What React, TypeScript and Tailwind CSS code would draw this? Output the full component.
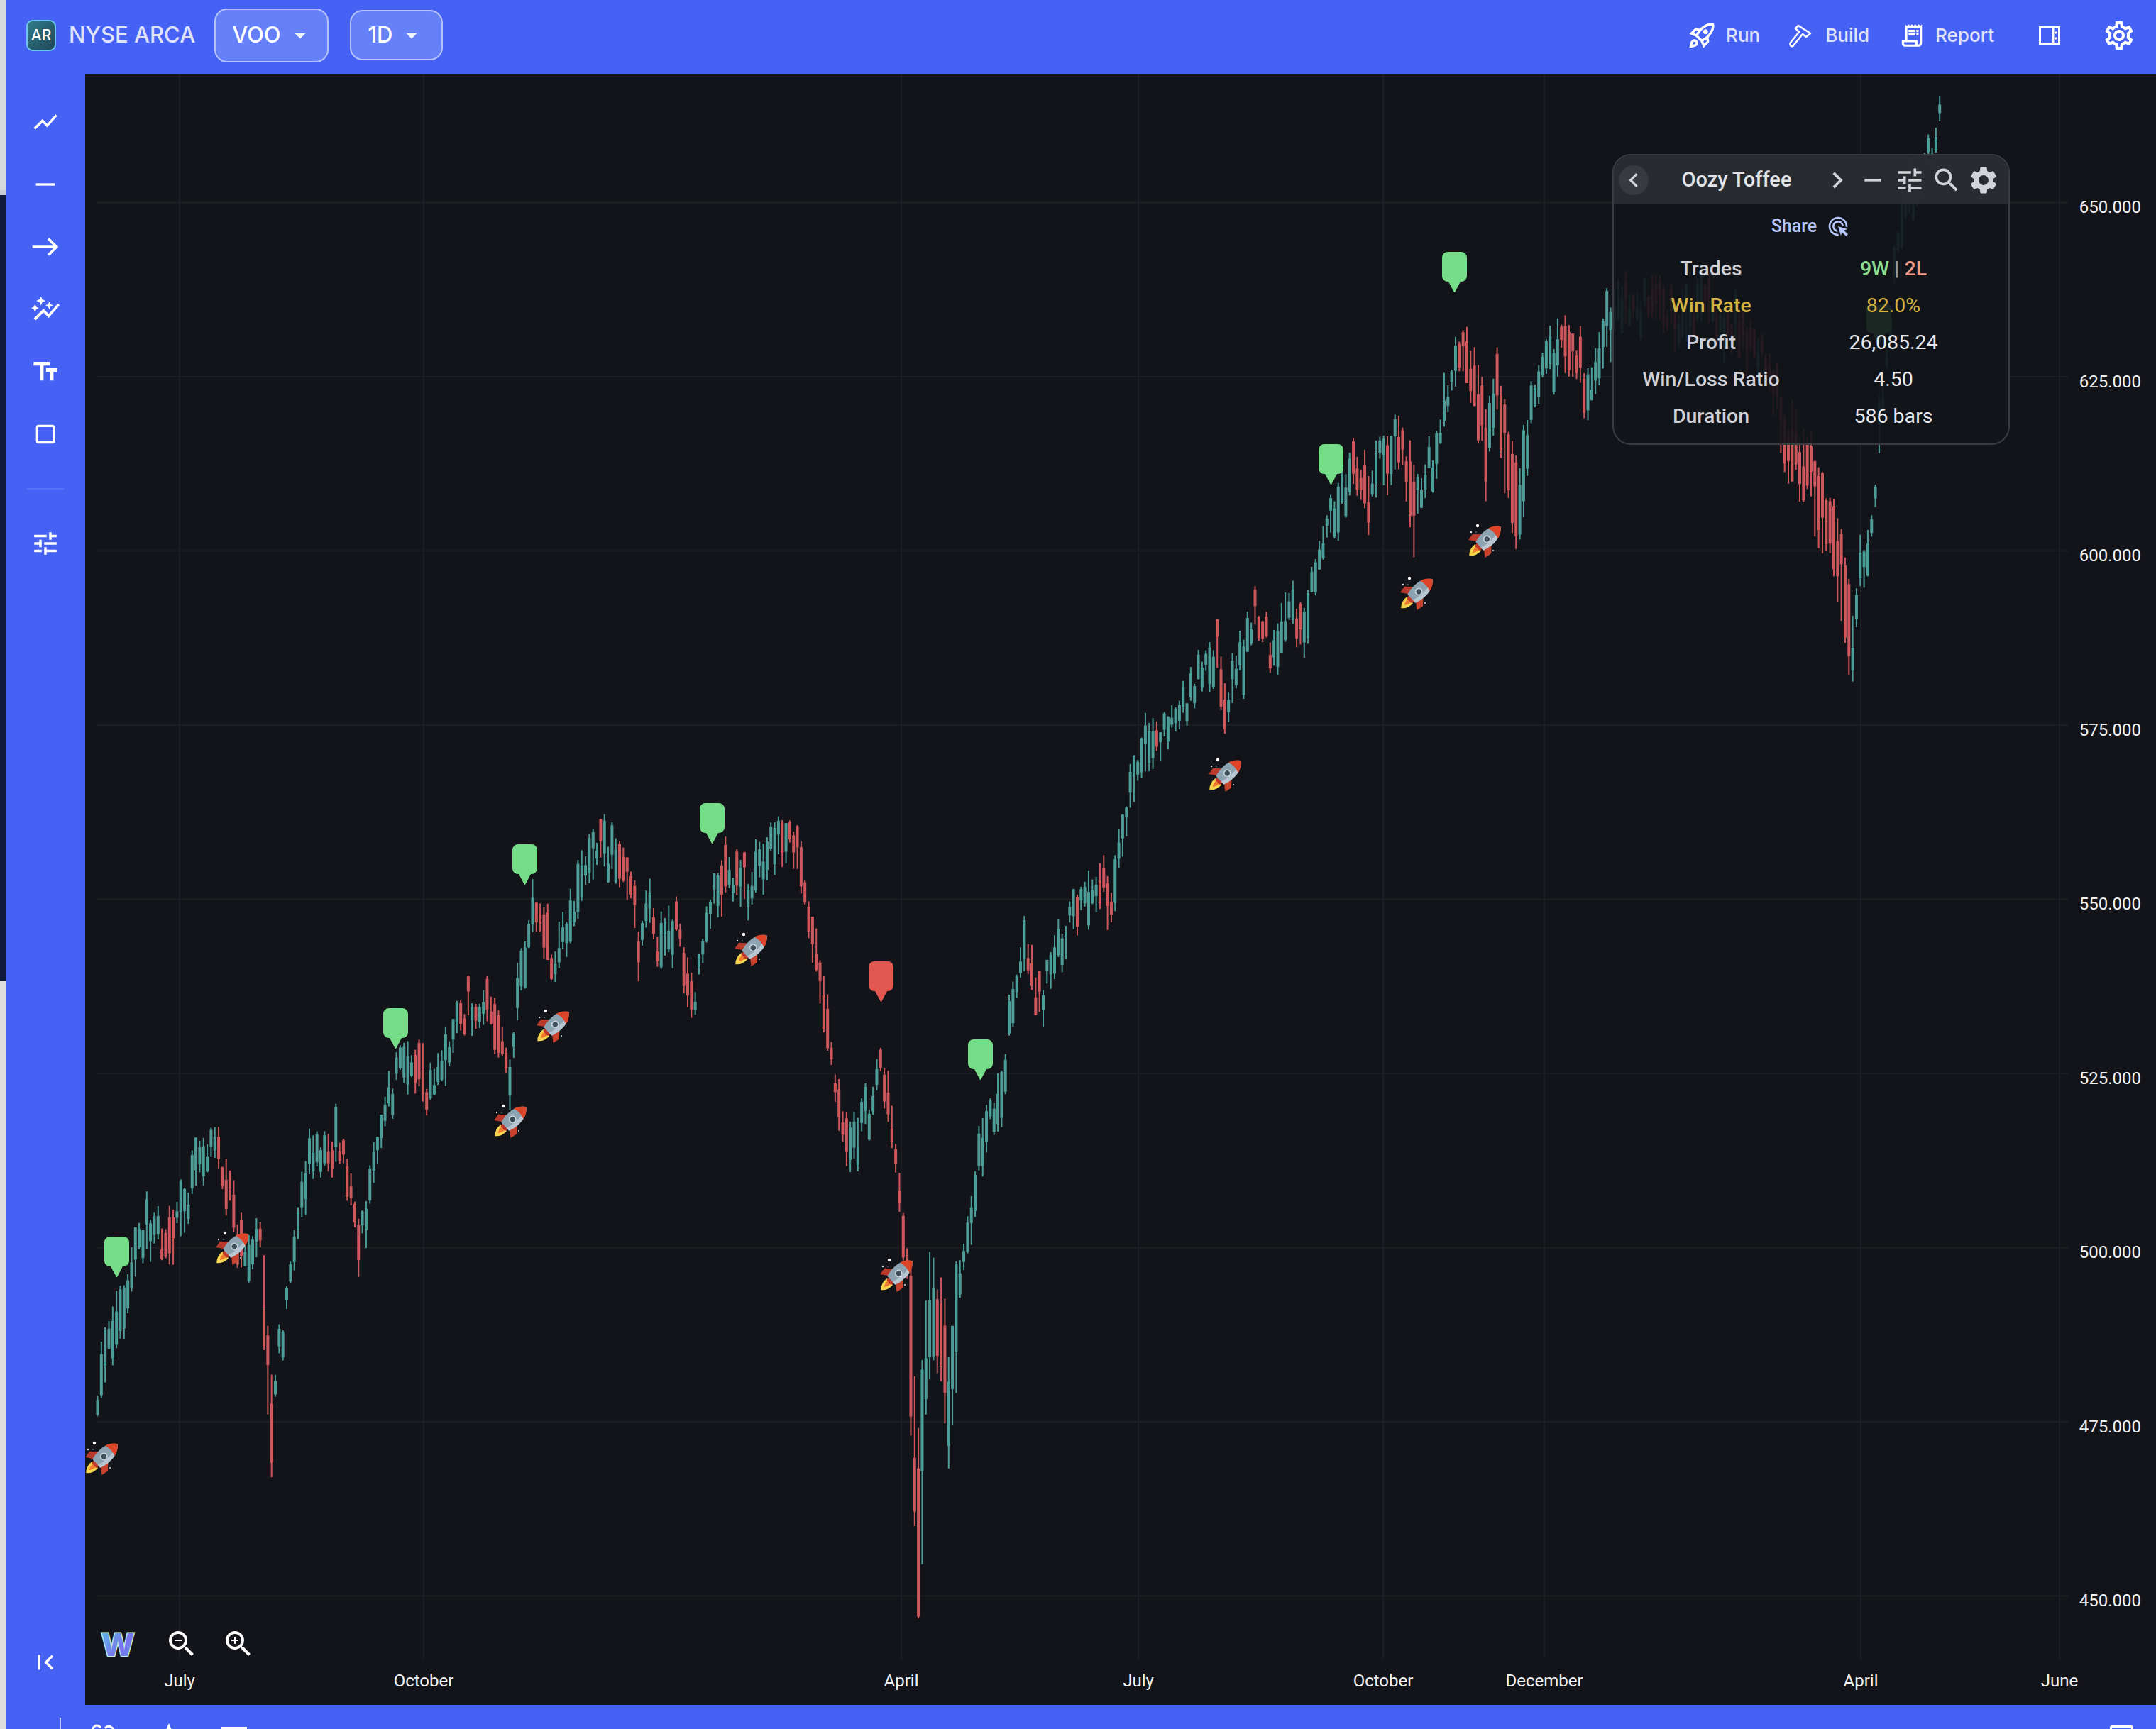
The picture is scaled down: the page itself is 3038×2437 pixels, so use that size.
import {
  MdAdsClick,
  MdArrowDropDown,
  MdAutoGraph,
  MdChevronLeft,
  MdChevronRight,
  MdCropSquare,
  MdEast,
  MdFirstPage,
  MdHorizontalRule,
  MdOutlineReceiptLong,
  MdOutlineRocketLaunch,
  MdOutlineSettings,
  MdRemove,
  MdSearch,
  MdSettings,
  MdShowChart,
  MdTextFields,
  MdTune,
  MdZoomIn,
  MdZoomOut,
} from 'react-icons/md';

const S = 1.9375;

// price path, traced from the picture (x, y of the bar centres at 1568 wide)
const path: [number, number][] = [
  [71, 1012], [78, 985], [85, 962], [92, 950], [97, 915], [105, 895], [113, 890], [125, 900], [133, 885],
  [140, 855], [148, 835], [157, 830], [163, 855], [170, 885], [176, 915], [185, 900], [189, 885], [193, 960],
  [197, 1030], [203, 985], [210, 945], [216, 895], [224, 850], [233, 835], [248, 835], [254, 860], [262, 905],
  [268, 870], [275, 835], [283, 800], [290, 780], [300, 777], [312, 795], [322, 770], [332, 740], [342, 730],
  [355, 738], [362, 748], [371, 780], [378, 715], [386, 665], [394, 670], [403, 705], [410, 680], [420, 650],
  [430, 630], [438, 618], [452, 625], [460, 640], [465, 695], [472, 660], [480, 695], [492, 675], [498, 705],
  [505, 735], [512, 685], [520, 640], [530, 640], [538, 630], [545, 650], [555, 630], [565, 610], [575, 605],
  [583, 640], [592, 690], [600, 735], [608, 785], [616, 840], [624, 825], [634, 805], [641, 780], [648, 815],
  [654, 860], [660, 930], [665, 1050], [669, 1125], [673, 985], [680, 945], [686, 990], [691, 1025], [698, 930],
  [706, 880], [712, 845], [717, 815], [724, 815], [730, 790], [734, 735], [742, 695], [750, 700], [757, 730],
  [765, 695], [772, 690], [780, 660], [792, 645], [802, 645], [810, 660], [815, 610], [822, 575], [832, 545],
  [845, 535], [855, 525], [866, 505], [878, 480], [886, 475], [890, 520], [898, 490], [905, 475], [912, 450],
  [920, 455], [926, 480], [935, 445], [947, 455], [957, 420], [966, 385], [975, 365], [985, 345], [996, 360],
  [1005, 330], [1020, 325], [1028, 370], [1035, 345], [1046, 330], [1052, 290], [1058, 255], [1068, 270],
  [1076, 295], [1081, 325], [1088, 280], [1095, 320], [1104, 365], [1112, 310], [1120, 270], [1135, 255],
  [1148, 265], [1156, 290], [1165, 240], [1180, 225], [1200, 220], [1220, 235], [1240, 225], [1262, 240],
  [1285, 265], [1300, 320], [1315, 340], [1328, 375], [1338, 410], [1346, 475], [1354, 405], [1361, 395],
  [1368, 300], [1373, 262], [1378, 185], [1385, 140], [1393, 150], [1400, 125], [1408, 100], [1411, 74],
];

const wide: [number, number, number][] = [
  [190, 200, 68], [660, 672, 150], [672, 696, 80], [1024, 1030, 56], [1075, 1110, 58], [1300, 1335, 50], [1335, 1350, 66],
];

function midAt(x: number) {
  for (let i = 1; i < path.length; i++) {
    if (x <= path[i][0]) {
      const [x0, y0] = path[i - 1];
      const [x1, y1] = path[i];
      return y0 + ((y1 - y0) * (x - x0)) / (x1 - x0);
    }
  }
  return path[path.length - 1][1];
}

let seed = 91;
function rnd() {
  seed = (seed * 16807) % 2147483647;
  return seed / 2147483647;
}

type Bar = { x: number; top: number; h: number; bodyTop: number; bodyH: number; up: boolean };

function makeBars() {
  const bars: Bar[] = [];
  for (let px = 137.5; px < 2736; px += 5.33) {
    const x = px / S;
    const m = midAt(x) * S;
    const slope = midAt(x + 3) - midAt(x - 3);
    const extra = wide.find((w) => x >= w[0] && x <= w[1]);
    const range = (extra ? extra[2] * (0.7 + rnd() * 0.5) : px > 2700 ? 18 : 15 + rnd() * 28) * S;
    const top = m - range / 2 + (rnd() - 0.5) * 44;
    const bodyH = range * (0.3 + rnd() * 0.55);
    const bodyTop = top + (range - bodyH) * rnd();
    bars.push({ x: px, top, h: range, bodyTop, bodyH, up: slope + (rnd() - 0.5) * 18 < 0 });
  }
  return bars;
}

const bars = makeBars();

const priceLabels = ['650.000', '625.000', '600.000', '575.000', '550.000', '525.000', '500.000', '475.000', '450.000'];
const monthLabels: [string, number][] = [
  ['July', 253], ['October', 597], ['April', 1270], ['July', 1604], ['October', 1949], ['December', 2176],
  ['April', 2622], ['June', 2902],
];

const markers: [number, number, string][] = [
  [165, 1743, '#75dd87'], [558, 1421, '#75dd87'], [740, 1190, '#75dd87'], [1004, 1132, '#75dd87'],
  [1242, 1355, '#e2574f'], [1382, 1465, '#75dd87'], [1876, 626, '#75dd87'], [2050, 355, '#75dd87'], [2648, 428, '#75dd87'],
];

const rockets: [number, number][] = [
  [143, 2056], [327, 1760], [719, 1581], [779, 1447], [1058, 1339], [1263, 1798], [1726, 1093], [1996, 837], [2092, 763],
];

function Rocket({ x, y }: { x: number; y: number }) {
  return (
    <g transform={`translate(${x} ${y})`}>
      <g transform="rotate(47) scale(0.9)">
        <path d="M-9 -6 L-21 6 L-19 17 L-8 9Z" fill="#b93a2c" />
        <path d="M9 -6 L21 6 L19 17 L8 9Z" fill="#c9432f" />
        <path d="M-7 14 Q-8 26 0 33 Q8 26 7 14Z" fill="#f6d54e" />
        <path d="M-3.500 14 Q-4 21 0 26 Q4 21 3.500 14Z" fill="#ee7a2f" />
        <path d="M-7 8 L7 8 L5 16 L-5 16Z" fill="#c2392b" />
        <path d="M0 -34 C12 -25 15 -8 9 11 L-9 11 C-15 -8 -12 -25 0 -34Z" fill="#8ea3b2" />
        <path d="M0 -34 C12 -25 15 -8 9 11 L3 11 C8 -6 6 -22 0 -34Z" fill="#b7c6d1" />
        <path d="M0 -34 C6 -30 9 -25 11 -18 Q0 -22 -11 -18 C-9 -25 -6 -30 0 -34Z" fill="#dc4527" />
        <circle cx="0" cy="-5" r="6" fill="#c7d3db" />
        <circle cx="0" cy="-5" r="4" fill="#3c4c59" />
      </g>
      <circle cx="-10" cy="-22" r="2.200" fill="#ffffff" />
      <circle cx="-19" cy="-13" r="1.200" fill="#e5e7eb" />
      <circle cx="12" cy="13" r="1" fill="#e5e7eb" />
      <circle cx="-12" cy="-13" r="0.800" fill="#9ca3af" />
    </g>
  );
}

function Chart() {
  return (
    <svg viewBox="120 105 2918 2298" className="absolute inset-0 h-full w-full font-['Roboto',sans-serif]">
      {priceLabels.map((label, i) => (
        <g key={label}>
          <rect x={136} y={284.5 + i * 245.5} width={2778} height={2} fill="#1c1e23" />
          <text x={3017} y={300 + i * 245.5} textAnchor="end" fontSize={24} fill="#f0f1f3">
            {label}
          </text>
        </g>
      ))}
      {monthLabels.map(([label, x], i) => (
        <g key={i}>
          <rect x={x - 1} y={105} width={2} height={2233} fill="#1c1e23" />
          <text x={x} y={2377} textAnchor="middle" fontSize={24} fill="#f0f1f3">
            {label}
          </text>
        </g>
      ))}
      {bars.map((b) => {
        const color = b.up ? '#4d9e99' : '#cf585c';
        return (
          <g key={b.x} fill={color}>
            <rect x={b.x - 1} y={b.top} width={2} height={b.h} />
            <rect x={b.x - 2} y={b.bodyTop} width={4} height={b.bodyH} />
          </g>
        );
      })}
      {markers.map(([x, y, color]) => (
        <path
          key={x}
          fill={color}
          d={`M${x - 9} ${y} h18 a8 8 0 0 1 8 8 v26 a8 8 0 0 1 -8 8 h-1 l-8 15 h-1 l-8 -15 h-1 a8 8 0 0 1 -8 -8 v-26 a8 8 0 0 1 8 -8z`}
        />
      ))}
      {rockets.map(([x, y]) => (
        <Rocket key={x} x={x} y={y} />
      ))}
    </svg>
  );
}

function WLogo() {
  return (
    <svg viewBox="-4 -8 58 56" className="h-[56px] w-[58px] font-['Inter',sans-serif]">
      <defs>
        <linearGradient id="wfill" x1="0" y1="0" x2="1" y2="1">
          <stop offset="0" stopColor="#58c4e8" />
          <stop offset="0.6" stopColor="#7a72ef" />
          <stop offset="1" stopColor="#5f9fea" />
        </linearGradient>
      </defs>
      <text
        x="25"
        y="37"
        textAnchor="middle"
        fontSize="44"
        fontWeight="800"
        fill="url(#wfill)"
        stroke="#c2ecd9"
        strokeWidth="3"
        paintOrder="stroke"
      >
        W
      </text>
    </svg>
  );
}

function PanelIcon() {
  return (
    <svg viewBox="0 0 30 26" className="h-[26px] w-[30px]" fill="none" stroke="currentColor">
      <rect x="1.500" y="1.500" width="27" height="23" strokeWidth="3" />
      <path d="M20 2v22" strokeWidth="3" />
      <path d="M24 7.500v3M24 15.500v3" strokeWidth="4" />
    </svg>
  );
}

function HammerIcon() {
  return (
    <svg viewBox="0 0 32 34" className="h-[34px] w-[32px]" fill="none" stroke="currentColor" strokeWidth="2.500" strokeLinejoin="round">
      <path d="M13 3 L9 7 L14 12 L2 27 Q0.500 30 3 32 Q5.500 33 7 30 L19 15 L24 19 L30 14 Z" />
    </svg>
  );
}

function DropButton({ label, className }: { label: string; className: string }) {
  return (
    <button className={`flex items-center rounded-[18px] border-2 border-[#b5c2fb] bg-[#6680f7] pl-[23px] text-[31px] font-medium text-white ${className}`}>
      {label}
      <MdArrowDropDown size={36} className="ml-[9px] text-[#f2f4ff]" />
    </button>
  );
}

const statRows: [string, string][] = [
  ['Profit', '26,085.24'],
  ['Win/Loss Ratio', '4.50'],
  ['Duration', '586 bars'],
];

function StatsPanel() {
  return (
    <div className="absolute left-[2152px] top-[112px] h-[410px] w-[560px] overflow-hidden rounded-[26px] border-2 border-[#3a3c42] bg-[#12141a]/90 font-['Roboto',sans-serif] text-[28.5px]">
      <div className="flex h-[69px] items-center bg-[#2a2d33]/95 pl-[7px] text-[#d2d3d8]">
        <div className="flex size-[42px] items-center justify-center rounded-full bg-[#373a40]">
          <MdChevronLeft size={40} />
        </div>
        <div className="w-[242px] pl-[6px] text-center text-[29px] font-medium text-[#e3e4e8]">Oozy Toffee</div>
        <div className="flex w-[48px] justify-center"><MdChevronRight size={46} /></div>
        <div className="flex w-[52px] justify-center"><MdRemove size={40} /></div>
        <div className="flex w-[52px] justify-center"><MdTune size={44} /></div>
        <div className="flex w-[52px] justify-center"><MdSearch size={44} /></div>
        <div className="flex w-[52px] justify-center"><MdSettings size={46} /></div>
      </div>
      <div className="flex h-[62px] items-center justify-center gap-[14px] pr-[2px] text-[25px] font-medium text-[#b4c6fc]">
        Share
        <MdAdsClick size={32} />
      </div>
      <div className="mt-[3px] grid grid-cols-[274px_240px] auto-rows-[52px] items-center text-center">
        <div className="font-medium text-[#d0d1d6]">Trades</div>
        <div className="font-medium">
          <span className="text-[#8fdc8f]">9W</span>
          <span className="text-[#9a9ca2]"> | </span>
          <span className="text-[#f09a8a]">2L</span>
        </div>
        <div className="font-medium text-[#d4b244]">Win Rate</div>
        <div className="text-[#d4b244]">82.0%</div>
        {statRows.map(([label, value]) => (
          <div key={label} className="contents">
            <div className="font-medium text-[#d0d1d6]">{label}</div>
            <div className="text-[#e8e9ee]">{value}</div>
          </div>
        ))}
      </div>
    </div>
  );
}

export default function App() {
  const railIcons = [
    <MdShowChart size={40} />,
    <MdHorizontalRule size={40} />,
    <MdEast size={44} />,
    <MdAutoGraph size={44} />,
    <MdTextFields size={42} />,
    <MdCropSquare size={40} />,
  ];

  return (
    <div className="flex h-[2437px] w-[3038px] overflow-hidden bg-[#4562f5] font-['Inter',sans-serif]">
      {/* strip of the page behind the app */}
      <div className="flex w-[8px] shrink-0 flex-col">
        <div className="h-[268px] bg-[#d8d9dc]" />
        <div className="h-[7px] bg-[#c9cdd6]" />
        <div className="h-[1108px] bg-[#0f1a3a]" />
        <div className="flex-1 bg-[#dcdcdc]" />
      </div>

      <div className="flex min-w-0 flex-1 flex-col">
        {/* Header */}
        <header className="flex h-[105px] shrink-0 items-center pb-[6px] pr-[28px] text-[#e0e3f8]">
          <div className="ml-[29px] flex h-[44px] w-[42px] items-center justify-center rounded-[9px] border-2 border-[#6cc7e8] bg-gradient-to-br from-[#2f7d8a] to-[#1f4658] text-[21px] font-medium text-white">
            AR
          </div>
          <span className="ml-[18px] text-[31px] font-medium">NYSE ARCA</span>
          <DropButton label="VOO" className="ml-[27px] h-[76px] w-[161px]" />
          <DropButton label="1D" className="ml-[30px] h-[71px] w-[131px]" />

          <div className="ml-auto flex items-center text-[26px] font-medium">
            <MdOutlineRocketLaunch size={42} className="text-white" />
            <span className="ml-[13px]">Run</span>
            <span className="ml-[41px] text-white"><HammerIcon /></span>
            <span className="ml-[19px]">Build</span>
            <MdOutlineReceiptLong size={38} className="ml-[41px] text-white" />
            <span className="ml-[14px]">Report</span>
            <span className="ml-[63px] text-white"><PanelIcon /></span>
            <MdOutlineSettings size={48} className="ml-[59px] text-white" />
          </div>
        </header>

        <div className="flex min-h-0 flex-1">
          {/* Tool rail */}
          <nav className="flex w-[112px] shrink-0 flex-col items-center pt-[23px] text-white">
            {railIcons.map((icon, i) => (
              <div key={i} className="flex h-[88px] items-center justify-center">{icon}</div>
            ))}
            <div className="mt-[32px] h-[2px] w-[52px] bg-white/10" />
            <div className="mt-[32px] flex h-[88px] items-center justify-center"><MdTune size={42} /></div>
            <div className="mb-[16px] mt-auto flex h-[88px] items-center justify-center"><MdFirstPage size={42} /></div>
          </nav>

          {/* Chart */}
          <main className="relative min-w-0 flex-1 bg-[#131419]">
            <Chart />
            <StatsPanel />
            <div className="absolute left-[17px] top-[2184px] flex items-center text-white">
              <WLogo />
              <MdZoomOut size={48} className="ml-[37px]" />
              <MdZoomIn size={48} className="ml-[32px]" />
            </div>
          </main>
        </div>

        {/* Footer, cut off by the window */}
        <footer className="relative flex h-[34px] shrink-0 overflow-hidden text-white">
          <div className="ml-[76px] mt-[18px] h-[16px] w-[2px] bg-[#b5c2fb]" />
          <svg viewBox="0 0 34 34" className="ml-[42px] mt-[26px] size-[34px]" fill="none" stroke="currentColor" strokeWidth="3">
            <path d="M2 8 Q8 -1 14 6" />
            <path d="M20 7 Q25 1 32 8" />
          </svg>
          <svg viewBox="0 0 24 24" className="ml-[62px] mt-[26px] size-[28px]" fill="currentColor">
            <path d="M12 0 l3 7 h-6z M5 7 h14 v12 h-14z" />
          </svg>
          <div className="ml-[60px] mt-[31px] h-[4px] w-[36px] bg-white" />
          <div className="ml-auto mr-[32px] mt-[29px] h-[20px] w-[33px] rounded-[3px] border-[3px] border-white" />
        </footer>
      </div>
    </div>
  );
}
